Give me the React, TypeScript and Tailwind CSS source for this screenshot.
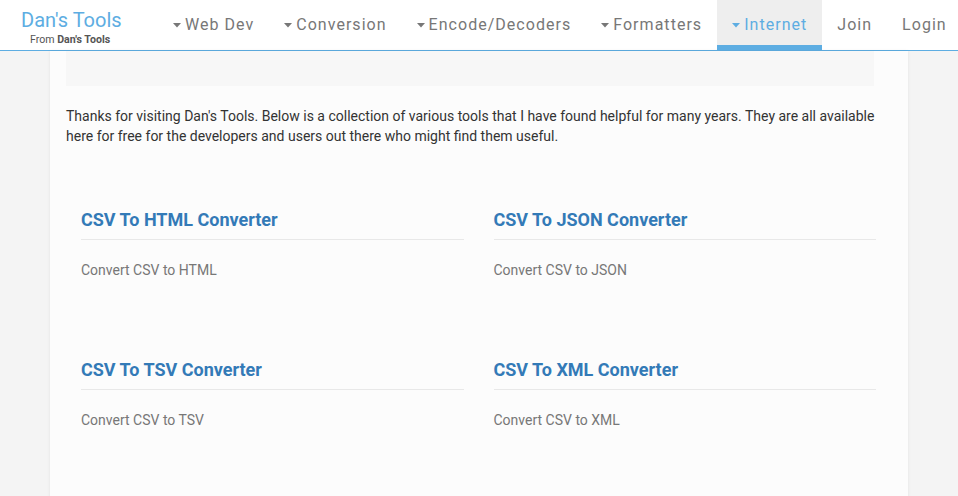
import { Fragment } from 'react'

const NAV = [
  { label: 'Web Dev', caret: true },
  { label: 'Conversion', caret: true },
  { label: 'Encode/Decoders', caret: true },
  { label: 'Formatters', caret: true },
  { label: 'Internet', caret: true, active: true },
  { label: 'Join' },
  { label: 'Login' },
]

const TOOLS = [
  { title: 'CSV To HTML Converter', desc: 'Convert CSV to HTML' },
  { title: 'CSV To JSON Converter', desc: 'Convert CSV to JSON' },
  { title: 'CSV To TSV Converter', desc: 'Convert CSV to TSV' },
  { title: 'CSV To XML Converter', desc: 'Convert CSV to XML' },
]

function Caret({ active }: { active?: boolean }) {
  return (
    <svg width="8" height="5" viewBox="0 0 8 5" className={active ? 'fill-[#5dade2]' : 'fill-[#777]'}>
      <path d="M0 0h8L4 4.5z" />
    </svg>
  )
}

export default function App() {
  return (
    <div className="min-h-[496px] bg-[#f4f4f4] font-['Roboto',sans-serif]">
      {/* Navbar */}
      <header className="flex h-[51px] border-b border-[#5dade2] bg-white">
        <a className="flex w-[158px] shrink-0 flex-col pl-[21px] pt-[8px]">
          <span className="text-[20px] leading-[24px] text-[#5dade2]">Dan's Tools</span>
          <span className="ml-[9px] mt-[1px] text-[10.6px] leading-[13px] text-[#555]">
            From <b>Dan's Tools</b>
          </span>
        </a>
        <nav className="flex">
          {NAV.map((n) => (
            <a
              key={n.label}
              className={[
                'flex shrink-0 items-center gap-[4px] whitespace-nowrap px-[15px] text-[16px] tracking-[1.03px]',
                n.active ? 'border-b-[5px] border-[#5dade2] bg-[#eee] pt-[5px] text-[#5dade2]' : 'text-[#777]',
              ].join(' ')}
            >
              {n.caret && <Caret active={n.active} />}
              {n.label}
            </a>
          ))}
        </nav>
      </header>

      {/* Page container */}
      <main className="mx-[50px] min-h-[445px] bg-[#fcfcfc] pl-4 pr-[34px] shadow-[0_0_3px_rgba(0,0,0,0.08)]">
        <div className="h-[35px] bg-[#f7f7f7]" />
        <p className="-mr-[6px] mt-[20px] text-[14px] leading-[20px] text-[#333]">
          Thanks for visiting Dan's Tools. Below is a collection of various tools that I have found helpful for many years. They are all available
          here for free for the developers and users out there who might find them useful.
        </p>

        <div className="ml-[15px] mt-[62px] grid w-[795px] grid-cols-2 gap-x-[30px]">
          {TOOLS.map((t) => (
            <Fragment key={t.title}>
              <div className="h-[150px]">
                <h3 className="border-b border-[#e8e8e8] pb-[8px] pt-[1px] text-[18px] font-bold leading-[22px] text-[#337ab7]">
                  {t.title}
                </h3>
                <p className="mt-[20px] text-[14px] leading-[20px] text-[#777]">{t.desc}</p>
              </div>
            </Fragment>
          ))}
        </div>
      </main>
    </div>
  )
}
